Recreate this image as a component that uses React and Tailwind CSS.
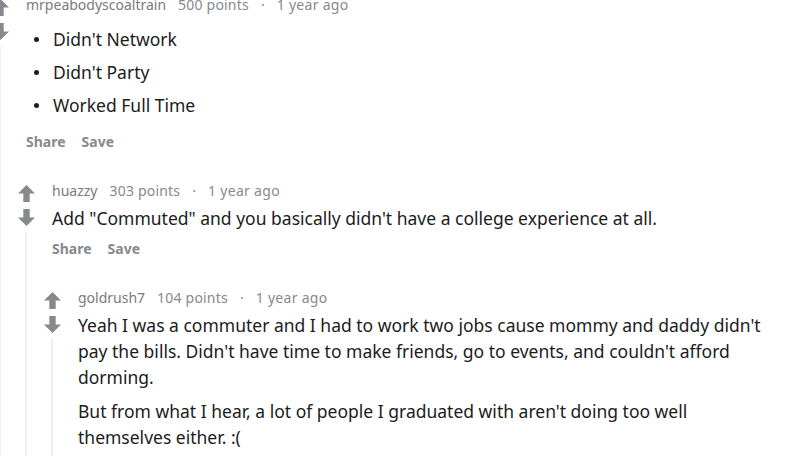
import React from 'react';

const Arrow = ({ down }) => (
  <svg width="17" height="17" viewBox="0 0 16 16" className={down ? 'mt-[7px] rotate-180' : ''}>
    <path d="M8 0 L16 8 H11 V16 H5 V8 H0 Z" fill="#878a8c" />
  </svg>
);

const Meta = ({ author, points, time }) => (
  <div className="flex h-4 items-center whitespace-nowrap text-[14px] leading-4 text-[#878a8c]">
    <span className="text-[#787c7e]">{author}</span>
    <span className="ml-[12px] tracking-[0.2px]">{points} points</span>
    <span className="mx-[12px]">·</span>
    <span className="tracking-[0.3px]">{time}</span>
  </div>
);

const Actions = ({ top }) => (
  <div className={`flex h-4 items-center gap-4 text-[14px] font-bold leading-4 text-[#878a8c] ${top}`}>
    <span>Share</span>
    <span>Save</span>
  </div>
);

const Comment = ({ author, points, time, children, actionsTop = 'mt-[10px]', replies }) => (
  <div className="flex">
    <div className="flex w-[28px] shrink-0 flex-col items-center pt-[2px]">
      <Arrow />
      <Arrow down />
      <div className="mt-[6px] w-[2px] flex-1 bg-[#edeff1]" />
    </div>
    <div className="ml-[12px] min-w-0 flex-1">
      <Meta author={author} points={points} time={time} />
      {children}
      <Actions top={actionsTop} />
      {replies && <div className="-ml-[14px] mt-[33px]">{replies}</div>}
    </div>
  </div>
);

export default function App() {
  return (
    <div
      className="h-[456px] w-[799px] overflow-hidden bg-white pr-[20px] text-[#1c1c1c]"
      style={{ fontFamily: '"Noto Sans", "Open Sans", sans-serif' }}
    >
      <div className="-ml-[14px] -mt-[3px]">
        <Comment
          author="mrpeabodyscoaltrain"
          points="500"
          time="1 year ago"
          actionsTop="mt-[16px]"
          replies={
            <Comment
              author="huazzy"
              points="303"
              time="1 year ago"
              replies={
                <Comment author="goldrush7" points="104" time="1 year ago">
                  <div className="mt-[6px] space-y-[8px] text-[17.5px] leading-[26px]">
                    <p>
                      Yeah I was a commuter and I had to work two jobs cause mommy and daddy didn't pay the
                      bills. Didn't have time to make friends, go to events, and couldn't afford dorming.
                    </p>
                    <p>But from what I hear, a lot of people I graduated with aren't doing too well themselves either. :(</p>
                    <p className="h-[40px]" />
                  </div>
                </Comment>
              }
            >
              <p className="mt-[6px] text-[17.5px] leading-[26px]">
                Add "Commuted" and you basically didn't have a college experience at all.
              </p>
            </Comment>
          }
        >
          <ul className="mt-[13px] space-y-[7px] text-[17.5px] leading-[26px]">
            {["Didn't Network", "Didn't Party", 'Worked Full Time'].map((t) => (
              <li key={t} className="flex items-center">
                <span className="ml-[8px] mr-[14px] h-[5px] w-[5px] rounded-full bg-[#1c1c1c]" />
                {t}
              </li>
            ))}
          </ul>
        </Comment>
      </div>
    </div>
  );
}
